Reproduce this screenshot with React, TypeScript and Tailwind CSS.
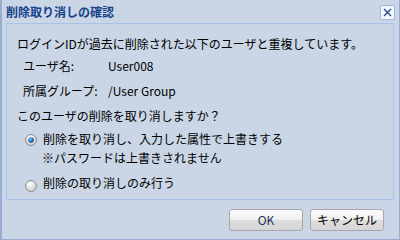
import React from "react";

const font = { fontFamily: '"Noto Sans CJK JP", "Noto Sans", sans-serif' };

function Radio({ checked }: { checked: boolean }) {
  return (
    <svg width="12" height="12" viewBox="0 0 12 12" className="shrink-0">
      <defs>
        <radialGradient id={checked ? "rg1" : "rg2"} cx="40%" cy="35%" r="70%">
          <stop offset="0%" stopColor="#ffffff" />
          <stop offset="100%" stopColor="#c9c9c9" />
        </radialGradient>
        <radialGradient id="dot" cx="40%" cy="35%" r="70%">
          <stop offset="0%" stopColor="#7fd0ff" />
          <stop offset="60%" stopColor="#1a6fc0" />
          <stop offset="100%" stopColor="#0b3f80" />
        </radialGradient>
      </defs>
      <circle cx="6" cy="6" r="5.5" fill={`url(#${checked ? "rg1" : "rg2"})`} stroke="#8d8d8d" strokeWidth="1" />
      {checked && <circle cx="6" cy="6" r="2.8" fill="url(#dot)" />}
    </svg>
  );
}

export default function App() {
  return (
    <div
      className="w-[400px] h-[240px] bg-[#cad6e5] border-l-2 border-r border-b border-[#98aed0] flex flex-col text-[12px] text-black"
      style={font}
    >
      <div className="h-[23px] flex items-center justify-between pl-[4px] pr-[4px]">
        <span className="text-[12px] font-bold text-[#15428b] leading-none">削除取り消しの確認</span>
        <div className="w-[15px] h-[15px] mt-[1px] rounded-[2px] border border-[#9fb8dc] bg-[#f3f7fc] flex items-center justify-center">
          <svg width="9" height="9" viewBox="0 0 9 9">
            <path d="M1 1 L8 8 M8 1 L1 8" stroke="#2d4c8c" strokeWidth="1.4" />
          </svg>
        </div>
      </div>
      <div className="ml-[4px] mr-[5px] h-[177px] border border-[#a9c2ea] flex flex-col pl-[10px]">
        <div className="h-[20px] leading-[20px] mt-[10px]">ログインIDが過去に削除された以下のユーザと重複しています。</div>
        <div className="h-[20px] leading-[20px] mt-[2px] flex pl-[6px]">
          <span className="w-[85px]">ユーザ名:</span>
          <span>User008</span>
        </div>
        <div className="h-[20px] leading-[20px] mt-[5px] flex pl-[6px]">
          <span className="w-[85px]">所属グループ:</span>
          <span>/User Group</span>
        </div>
        <div className="h-[20px] leading-[20px] mt-[5px]">このユーザの削除を取り消しますか？</div>
        <div className="h-[19px] leading-[19px] mt-[3px] flex items-center pl-[8px] gap-[6px]">
          <div className="mt-[3px]"><Radio checked /></div>
          <span>削除を取り消し、入力した属性で上書きする</span>
        </div>
        <div className="h-[20px] leading-[20px] pl-[25px]">※パスワードは上書きされません</div>
        <div className="h-[20px] leading-[20px] mt-[5px] flex items-center pl-[8px] gap-[6px]">
          <div className="mt-[5px]"><Radio checked={false} /></div>
          <span>削除の取り消しのみ行う</span>
        </div>
      </div>
      <div className="flex justify-end gap-[7px] pr-[15px] mt-[9px]">
        <button className="w-[74px] h-[22px] rounded-[3px] border border-[#a7a7a7] bg-[linear-gradient(to_bottom,#fbfbfb_0%,#f0f0f0_50%,#dddddd_51%,#d6d6d6_100%)] text-[12px] text-[#23315a] leading-none">
          OK
        </button>
        <button className="w-[74px] h-[22px] rounded-[3px] border border-[#a7a7a7] bg-[linear-gradient(to_bottom,#fbfbfb_0%,#f0f0f0_50%,#dddddd_51%,#d6d6d6_100%)] text-[12px] text-black leading-none">
          キャンセル
        </button>
      </div>
    </div>
  );
}
